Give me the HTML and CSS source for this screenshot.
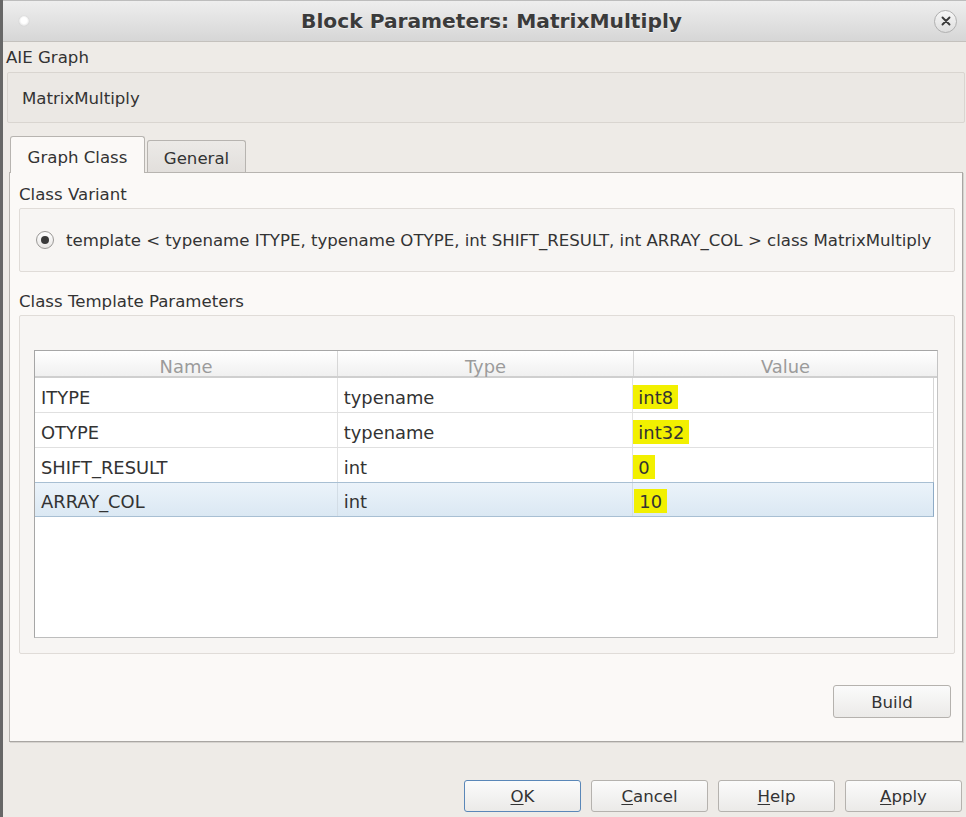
FILE: index.html
```html
<!DOCTYPE html>
<html>
<head>
<meta charset="utf-8">
<title>Block Parameters: MatrixMultiply</title>
<link rel="stylesheet" href="styles.css">
</head>
<body>
<div class="window">
  <div class="titlebar">
    <span class="tb-dot"></span>
    <div class="title">Block Parameters: MatrixMultiply</div>
    <span class="tb-close">
      <svg width="12" height="12" viewBox="0 0 12 12"><path d="M2.5 2.5 L9.5 9.5 M9.5 2.5 L2.5 9.5" stroke="#3a3a3a" stroke-width="1.9" stroke-linecap="round" fill="none"/></svg>
    </span>
  </div>

  <div class="content">
    <div class="top-label">AIE Graph</div>
    <div class="namebox">MatrixMultiply</div>

    <div class="tabs">
      <div class="tab active">Graph Class</div>
      <div class="tab">General</div>
    </div>

    <div class="pane">
      <div class="label first">Class Variant</div>
      <div class="group variant">
        <span class="radio"><span class="radio-dot"></span></span>
        <span class="variant-text">template &lt; typename ITYPE, typename OTYPE, int SHIFT_RESULT, int ARRAY_COL &gt; class MatrixMultiply</span>
      </div>

      <div class="label second">Class Template Parameters</div>
      <div class="group params">
        <div class="table">
          <div class="thead">
            <div class="th c-name">Name</div>
            <div class="th c-type">Type</div>
            <div class="th c-value">Value</div>
          </div>
          <div class="row">
            <div class="td c-name">ITYPE</div>
            <div class="td c-type">typename</div>
            <div class="td c-value"><span class="hl">int8</span></div>
          </div>
          <div class="row">
            <div class="td c-name">OTYPE</div>
            <div class="td c-type">typename</div>
            <div class="td c-value"><span class="hl">int32</span></div>
          </div>
          <div class="row">
            <div class="td c-name">SHIFT_RESULT</div>
            <div class="td c-type">int</div>
            <div class="td c-value"><span class="hl">0</span></div>
          </div>
          <div class="row selected">
            <div class="td c-name">ARRAY_COL</div>
            <div class="td c-type">int</div>
            <div class="td c-value focus"><span class="hl">10</span></div>
          </div>
        </div>
      </div>

      <div class="build-row">
        <button class="btn build">Build</button>
      </div>
    </div>

    <div class="footer">
      <button class="btn default"><u>O</u>K</button>
      <button class="btn"><u>C</u>ancel</button>
      <button class="btn"><u>H</u>elp</button>
      <button class="btn"><u>A</u>pply</button>
    </div>
  </div>
</div>
</body>
</html>
```

FILE: styles.css
```css
* { box-sizing: border-box; }

html, body {
  margin: 0;
  padding: 0;
}

body {
  width: 966px;
  height: 817px;
  overflow: hidden;
  background: #eeebe7;
  font-family: "DejaVu Sans", "Noto Sans", sans-serif;
  color: #333333;
}

.window {
  height: 817px;
  border-left: 3px solid #676767;
  display: flex;
  flex-direction: column;
}

/* title bar */
.titlebar {
  height: 42px;
  flex: 0 0 42px;
  display: flex;
  align-items: center;
  background: linear-gradient(#eeeeee, #d6d6d6);
  border-top: 1px solid #bdbdbd;
  border-bottom: 1px solid #c4c1bd;
}

.tb-dot {
  width: 10px;
  height: 10px;
  margin-left: 16px;
  margin-top: -1px;
  border-radius: 50%;
  background: radial-gradient(circle at 50% 45%, #ffffff 40%, #e2e2e2 75%, #c8c8c8 100%);
  box-shadow: 0 0 1px #bbbbbb;
}

.title {
  flex: 1;
  text-align: center;
  padding-left: 20px;
  font-size: 20.2px;
  font-weight: bold;
  color: #3b3b3b;
  text-shadow: 0 1px 0 rgba(255,255,255,0.6);
  margin-top: 0;
}

.tb-close {
  width: 23px;
  height: 23px;
  margin-right: 9px;
  border-radius: 50%;
  border: 1px solid #b0b0b0;
  background: linear-gradient(#f7f7f7, #dedede);
  display: flex;
  align-items: center;
  justify-content: center;
}

/* content */
.content {
  flex: 1;
  display: flex;
  flex-direction: column;
}

.top-label {
  height: 30px;
  line-height: 31px;
  padding-left: 3px;
  font-size: 16.6px;
}

.namebox {
  height: 51px;
  margin-left: 4px;
  margin-right: 1px;
  border: 1px solid #d9d5d0;
  border-radius: 2px;
  background: #ebe8e4;
  padding-left: 14px;
  line-height: 51px;
  font-size: 16.6px;
}

/* tabs */
.tabs {
  display: flex;
  align-items: flex-end;
  margin-top: 13px;
  margin-left: 7px;
  height: 36px;
  position: relative;
  z-index: 2;
}

.tab {
  font-size: 16.6px;
  text-align: center;
  border: 1px solid #b7b4b0;
  border-bottom: none;
  border-radius: 3px 3px 0 0;
}

.tab.active {
  width: 135px;
  height: 37px;
  line-height: 41px;
  background: #fbf9f7;
  margin-bottom: -1px;
}

.tab:not(.active) {
  width: 99px;
  height: 32px;
  line-height: 35px;
  margin-left: 2px;
  background: linear-gradient(#eceae7, #e2dfdc);
}

/* pane */
.pane {
  width: 954px;
  height: 570px;
  margin-left: 6px;
  background: #fbf9f7;
  border: 1px solid #b7b4b0;
  border-right-color: #a9a6a3;
  border-bottom-color: #a9a6a3;
  box-shadow: 1px 1px 0 #d6d3cf;
  padding: 0 7px 0 9px;
  display: flex;
  flex-direction: column;
  position: relative;
  z-index: 1;
}

.label {
  font-size: 16.6px;
  line-height: 31px;
  padding-left: 0;
}

.label.first {
  padding-top: 6px;
  height: 35px;
}

.label.second {
  padding-top: 14px;
  height: 43px;
}

.group {
  border: 1px solid #e0dcd8;
  border-radius: 2px;
  background: #f7f5f3;
}

.variant {
  height: 64px;
  display: flex;
  align-items: center;
  padding-left: 16px;
  font-size: 16.6px;
}

.radio {
  width: 18px;
  height: 18px;
  border-radius: 50%;
  border: 1px solid #9a9896;
  background: linear-gradient(#ffffff, #e8e6e4);
  display: flex;
  align-items: center;
  justify-content: center;
  margin-right: 12px;
  flex: 0 0 18px;
}

.radio-dot {
  width: 8px;
  height: 8px;
  border-radius: 50%;
  background: #3a3a3a;
}

.variant-text {
  white-space: nowrap;
  padding-top: 1px;
}

.params {
  height: 339px;
  padding: 34px 16px 15px 14px;
}

/* table */
.table {
  height: 288px;
  border: 1px solid #a6a6a6;
  border-right-color: #c4c4c4;
  border-bottom-color: #bdbdbd;
  background: #ffffff;
  font-size: 17.9px;
}

.thead {
  display: flex;
  height: 27px;
  background: linear-gradient(#ffffff, #f0f0f0);
  border-bottom: 2px solid #cfcfcf;
}

.th {
  text-align: center;
  color: #9b9b9b;
  line-height: 31px;
  height: 25px;
  border-right: 1px solid #d7d7d7;
}

.th.c-value {
  flex: 1;
  border-right: none;
}

.c-name { width: 303px; }
.c-type { width: 296px; }
.c-value { width: 300px; }

.row {
  display: flex;
  height: 35px;
  width: 899px;
  border-bottom: 1px solid #e0e0e0;
  border-right: 1px solid #d6d6d6;
}

.td {
  height: 34px;
  line-height: 39px;
  border-right: 1px solid #e2e2e2;
  padding-left: 6px;
  white-space: nowrap;
}

.td.c-value {
  border-right: none;
  padding-left: 0;
  padding-top: 4px;
  display: flex;
  align-items: center;
}

.hl {
  display: inline-block;
  background: #f2f000;
  line-height: 26px;
  height: 24px;
  padding: 0 5px;
}

.row.selected {
  background: linear-gradient(#ebf3fa, #dbe8f3);
  border-top: 1px solid #a8bfd3;
  border-bottom: 1px solid #a8bfd3;
  border-right: 1px solid #8eabc6;
  margin-top: -1px;
  height: 35px;
}

.row.selected .td {
  height: 33px;
  line-height: 38px;
  border-right-color: #d3dde6;
}

.row.selected .td.c-value {
  padding-top: 3px;
}

.td.focus {
  padding-left: 1px;
}

/* buttons */
.btn {
  font-family: "DejaVu Sans", "Noto Sans", sans-serif;
  font-size: 16.6px;
  color: #333333;
  border: 1px solid #b5b2ae;
  border-radius: 3px;
  background: linear-gradient(#fbfbfb, #ebeae8);
  padding: 1px 0 0 0;
}

.btn u {
  text-decoration-thickness: 1px;
  text-underline-offset: 2px;
}

.build-row {
  display: flex;
  justify-content: flex-end;
  margin-top: 31px;
  padding-right: 4px;
}

.btn.build {
  width: 118px;
  height: 33px;
}

.footer {
  display: flex;
  justify-content: flex-end;
  gap: 10px;
  margin-top: 38px;
  padding-right: 4px;
}

.footer .btn {
  width: 117px;
  height: 32px;
}

.btn.default {
  border-color: #5a87b8;
}
```
